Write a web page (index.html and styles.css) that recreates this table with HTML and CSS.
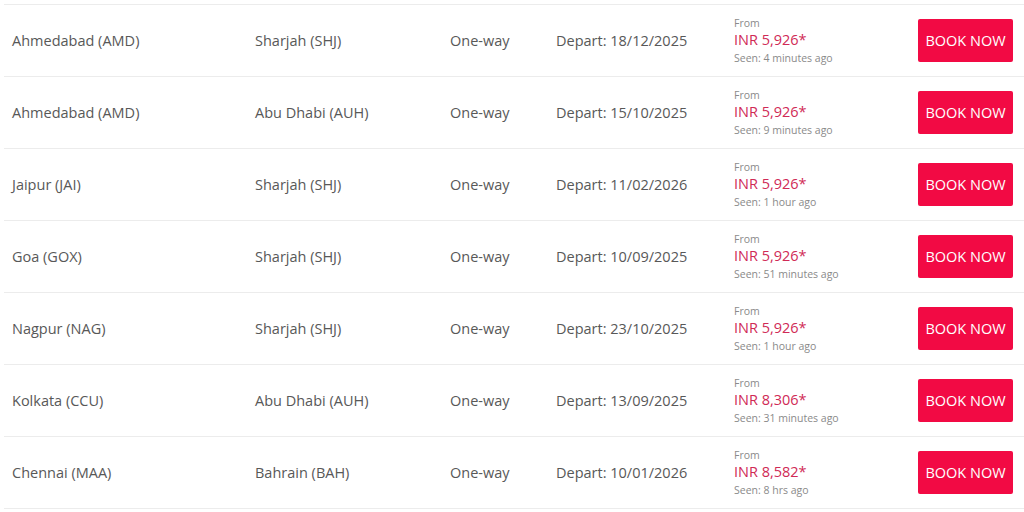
FILE: index.html
```html
<!DOCTYPE html>
<html>
<head>
<meta charset="utf-8">
<link rel="stylesheet" href="styles.css">
</head>
<body>
<div class="list">
  <div class="row">
    <div class="cell">Ahmedabad (AMD)</div>
    <div class="cell">Sharjah (SHJ)</div>
    <div class="cell">One-way</div>
    <div class="cell">Depart: 18/12/2025</div>
    <div class="price"><span class="from">From</span><span class="amount">INR 5,926*</span><span class="seen">Seen: 4 minutes ago</span></div>
    <a class="btn">BOOK NOW</a>
  </div>
  <div class="row">
    <div class="cell">Ahmedabad (AMD)</div>
    <div class="cell">Abu Dhabi (AUH)</div>
    <div class="cell">One-way</div>
    <div class="cell">Depart: 15/10/2025</div>
    <div class="price"><span class="from">From</span><span class="amount">INR 5,926*</span><span class="seen">Seen: 9 minutes ago</span></div>
    <a class="btn">BOOK NOW</a>
  </div>
  <div class="row">
    <div class="cell">Jaipur (JAI)</div>
    <div class="cell">Sharjah (SHJ)</div>
    <div class="cell">One-way</div>
    <div class="cell">Depart: 11/02/2026</div>
    <div class="price"><span class="from">From</span><span class="amount">INR 5,926*</span><span class="seen">Seen: 1 hour ago</span></div>
    <a class="btn">BOOK NOW</a>
  </div>
  <div class="row">
    <div class="cell">Goa (GOX)</div>
    <div class="cell">Sharjah (SHJ)</div>
    <div class="cell">One-way</div>
    <div class="cell">Depart: 10/09/2025</div>
    <div class="price"><span class="from">From</span><span class="amount">INR 5,926*</span><span class="seen">Seen: 51 minutes ago</span></div>
    <a class="btn">BOOK NOW</a>
  </div>
  <div class="row">
    <div class="cell">Nagpur (NAG)</div>
    <div class="cell">Sharjah (SHJ)</div>
    <div class="cell">One-way</div>
    <div class="cell">Depart: 23/10/2025</div>
    <div class="price"><span class="from">From</span><span class="amount">INR 5,926*</span><span class="seen">Seen: 1 hour ago</span></div>
    <a class="btn">BOOK NOW</a>
  </div>
  <div class="row">
    <div class="cell">Kolkata (CCU)</div>
    <div class="cell">Abu Dhabi (AUH)</div>
    <div class="cell">One-way</div>
    <div class="cell">Depart: 13/09/2025</div>
    <div class="price"><span class="from">From</span><span class="amount">INR 8,306*</span><span class="seen">Seen: 31 minutes ago</span></div>
    <a class="btn">BOOK NOW</a>
  </div>
  <div class="row">
    <div class="cell">Chennai (MAA)</div>
    <div class="cell">Bahrain (BAH)</div>
    <div class="cell">One-way</div>
    <div class="cell">Depart: 10/01/2026</div>
    <div class="price"><span class="from">From</span><span class="amount">INR 8,582*</span><span class="seen">Seen: 8 hrs ago</span></div>
    <a class="btn">BOOK NOW</a>
  </div>
</div>
</body>
</html>
```
FILE: styles.css
```css
html, body {
  margin: 0;
  padding: 0;
  background: #fff;
}
body {
  padding-top: 4px;
  font-family: "Open Sans", "Noto Sans", sans-serif;
  color: #555;
}
.list {
  margin-left: 4px;
  border-bottom: 1px solid #ececec;
}
.row {
  display: grid;
  grid-template-columns: 243px 195px 106px 178px 184px 95px;
  align-items: center;
  height: 71px;
  padding-left: 8px;
  border-top: 1px solid #ececec;
}
.cell {
  font-size: 14.5px;
  color: #585858;
  white-space: nowrap;
}
.price {
  display: flex;
  flex-direction: column;
  white-space: nowrap;
  margin-top: 1px;
}
.from {
  font-size: 10.5px;
  line-height: 16px;
  color: #8a8a8a;
}
.amount {
  font-size: 14.5px;
  line-height: 18px;
  color: #d02a56;
}
.seen {
  font-size: 10.5px;
  line-height: 18px;
  color: #8a8a8a;
}
.btn {
  display: flex;
  align-items: center;
  justify-content: center;
  height: 43px;
  background: #f20a44;
  color: #fff;
  font-size: 14.5px;
  border-radius: 2px;
  white-space: nowrap;
}
```
